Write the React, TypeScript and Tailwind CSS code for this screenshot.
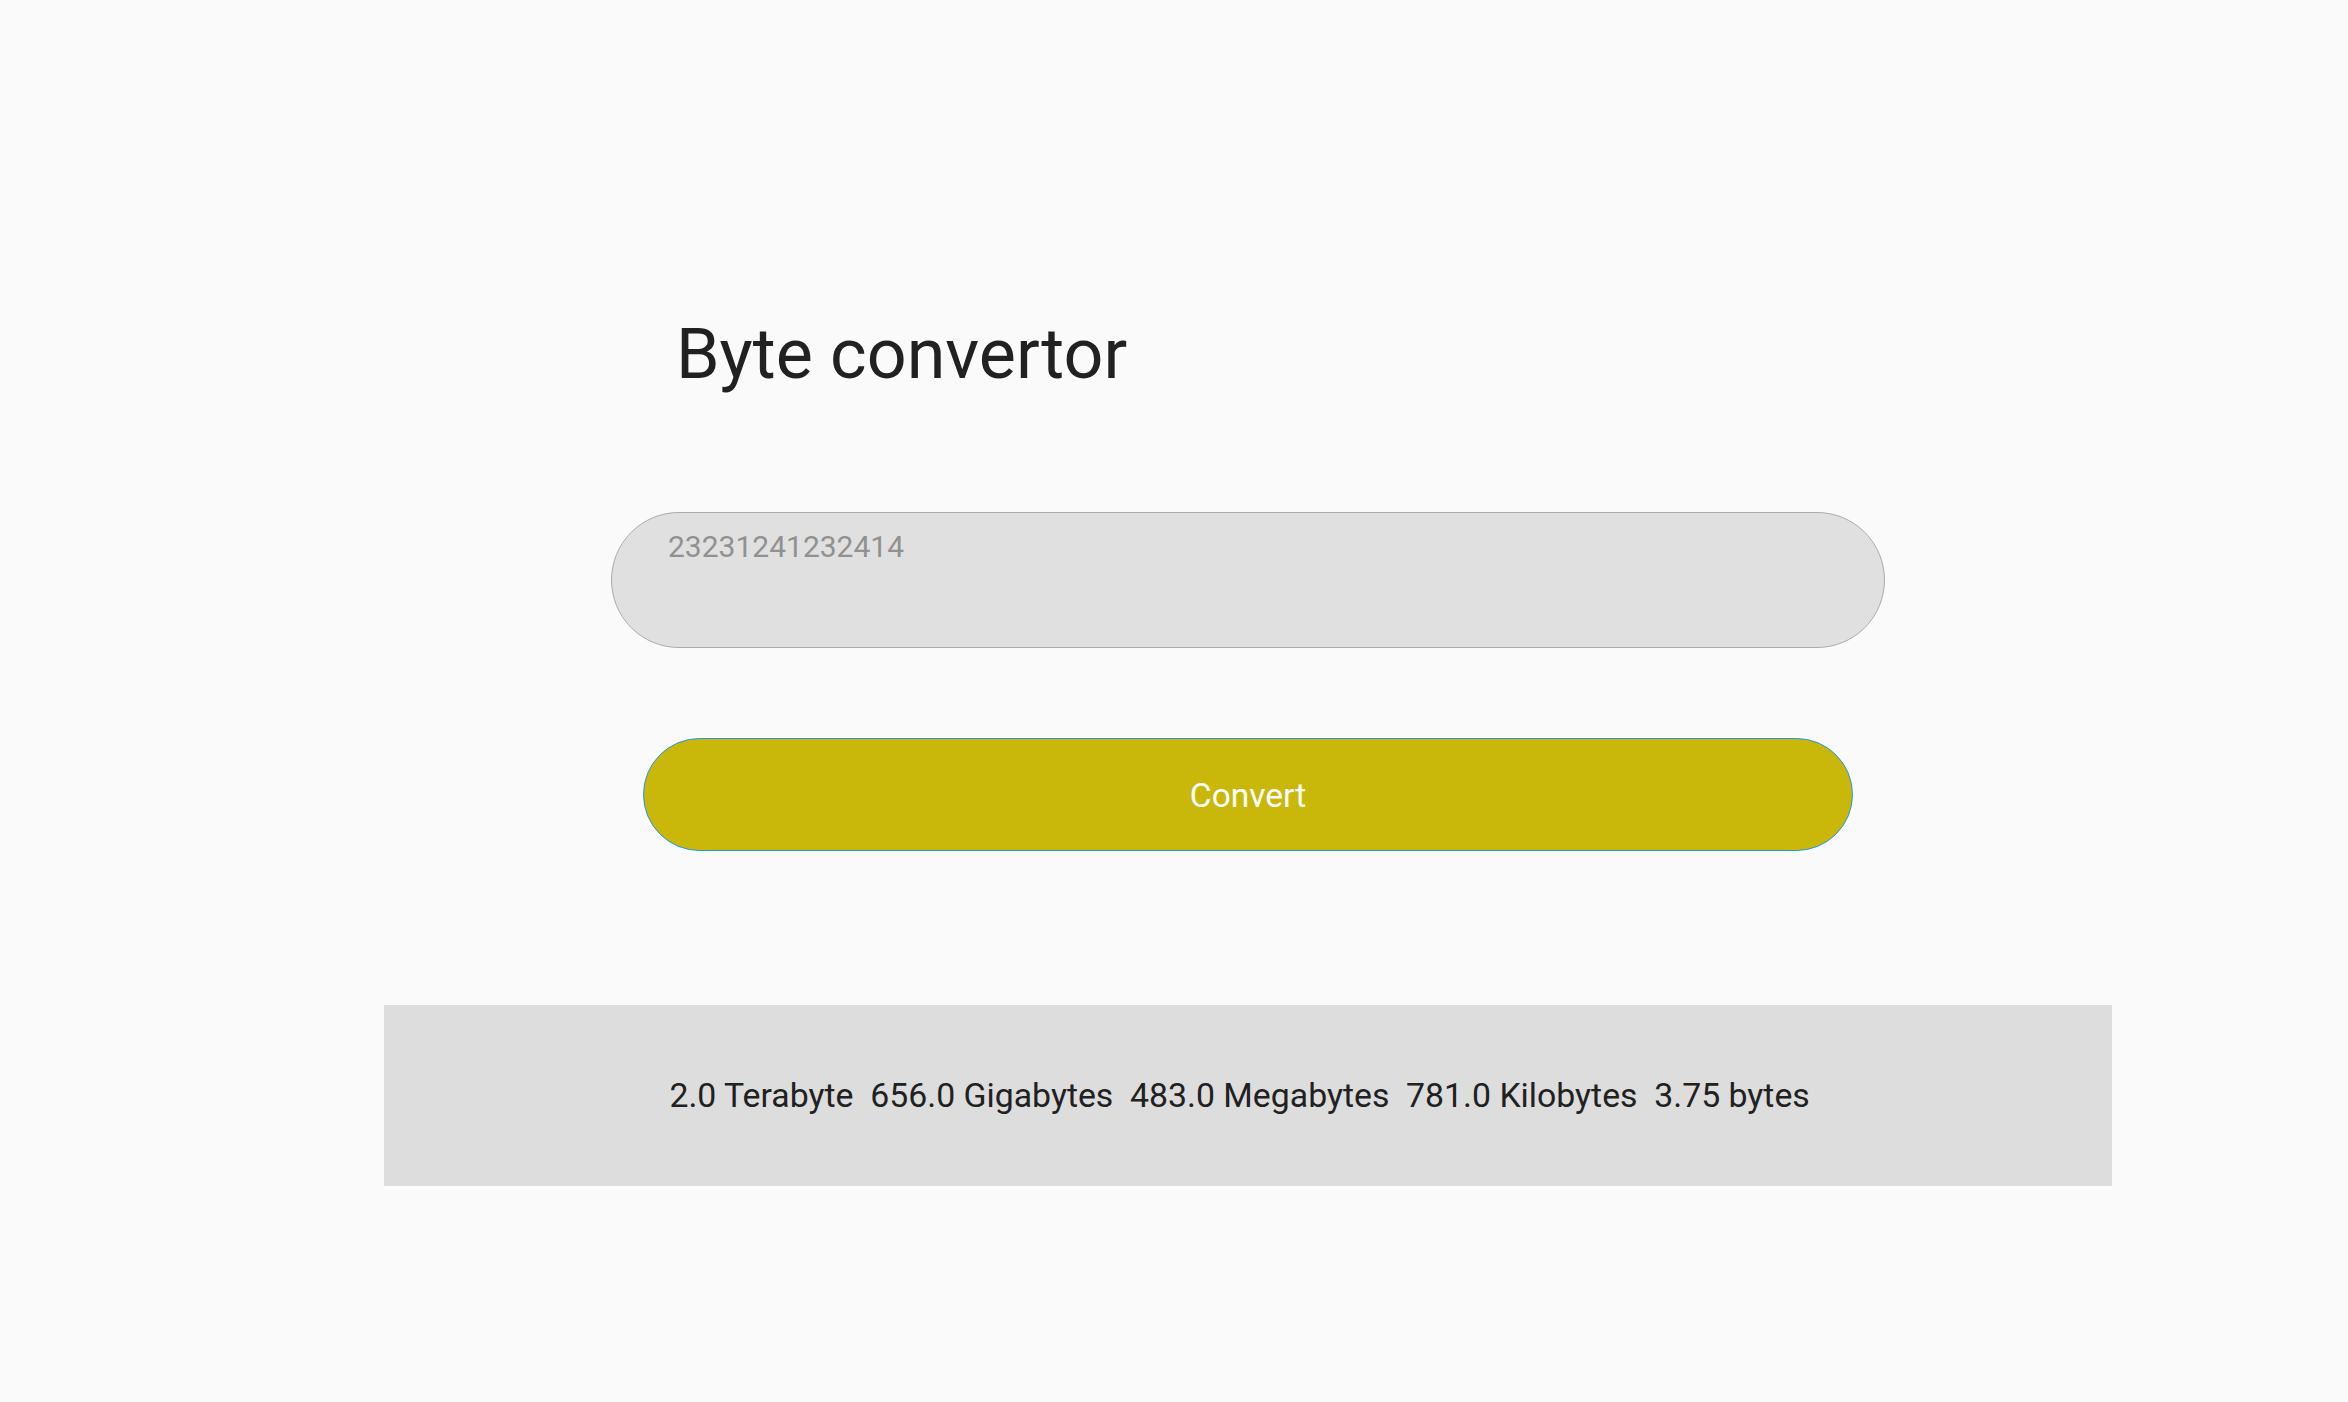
import React from "react";

export default function App() {
  return (
    <div
      className="min-h-[1402px] w-full bg-[#fafafa] pl-[384px] pt-[319px]"
      style={{ fontFamily: "Roboto, 'Noto Sans', Arial, sans-serif" }}
    >
      <div className="flex w-[1728px] flex-col">
        <h1 className="ml-[292px] text-[70px] leading-[70px] font-normal text-[#212121]">
          Byte convertor
        </h1>
        <textarea
          className="mx-auto mt-[123px] box-border block h-[136px] w-[1274px] resize-none rounded-full border border-[#ababab] bg-[#e0e0e0] pl-[56px] pr-[56px] pt-[16px] text-[30px] leading-[35px] text-[#212121] outline-none placeholder:text-[#919191]"
          placeholder="23231241232414"
          rows={1}
        />
        <button className="mx-auto mt-[90px] box-border flex h-[113px] w-[1210px] items-center justify-center rounded-full border border-[#2196f3] bg-[#c9b70a] pt-[2px] text-[33.5px] leading-none text-white">
          Convert
        </button>
        <div className="mt-[154px] flex h-[181px] w-[1728px] items-center justify-center bg-[#dddddd]">
          <span className="whitespace-pre text-[33.8px] leading-none text-[#212121]">
            {"2.0 Terabyte  656.0 Gigabytes  483.0 Megabytes  781.0 Kilobytes  3.75 bytes  "}
          </span>
        </div>
      </div>
    </div>
  );
}
